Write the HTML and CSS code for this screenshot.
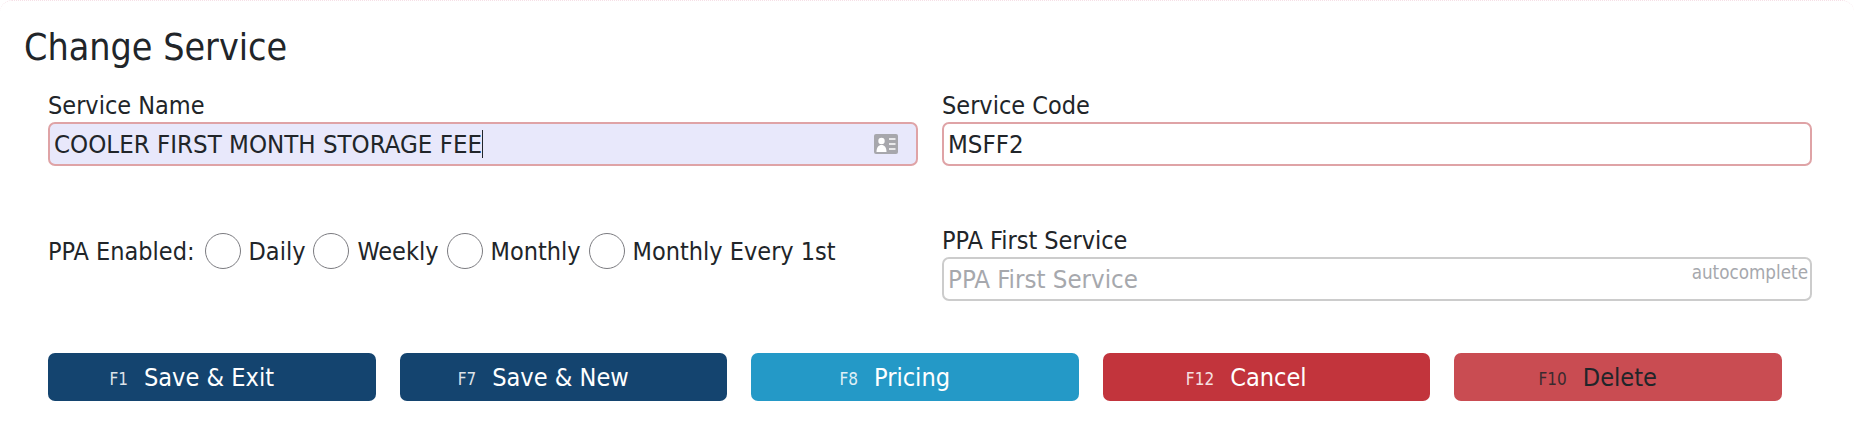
FILE: index.html
```html
<!DOCTYPE html>
<html lang="en">
<head>
<meta charset="utf-8">
<title>Change Service</title>
<link rel="stylesheet" href="styles.css">
</head>
<body>
<main class="card">
  <h1 class="title">Change Service</h1>
  <div class="form-grid">
    <div class="group">
      <label class="label">Service Name</label>
      <div class="field field-error field-active">
        <span class="value">COOLER FIRST MONTH STORAGE FEE</span><span class="caret"></span>
        <svg class="contact-icon" viewBox="0 0 24 20" width="24" height="20" aria-hidden="true">
          <rect x="0" y="0" width="24" height="20" rx="2" fill="#a7a7ac"/>
          <circle cx="7.5" cy="7" r="3.2" fill="#fff"/>
          <path d="M2.500 18c0-4.500 2-7 5-7s5 2.500 5 7z" fill="#fff"/>
          <path d="M15 5h6.500M15 10h6.500M15 15h6.500" stroke="#fff" stroke-width="1.600"/>
        </svg>
      </div>
    </div>
    <div class="group">
      <label class="label">Service Code</label>
      <div class="field field-error"><span class="value">MSFF2</span></div>
    </div>
    <div class="radio-row">
      <span class="radio-title">PPA Enabled:</span>
      <span class="radio"></span><span class="radio-text">Daily</span>
      <span class="radio"></span><span class="radio-text">Weekly</span>
      <span class="radio"></span><span class="radio-text">Monthly</span>
      <span class="radio"></span><span class="radio-text">Monthly Every 1st</span>
    </div>
    <div class="group">
      <label class="label">PPA First Service</label>
      <div class="field field-plain">
        <span class="placeholder">PPA First Service</span>
        <span class="hint">autocomplete</span>
      </div>
    </div>
  </div>
  <div class="actions">
    <button class="btn btn-navy"><span class="key">F1</span>Save &amp; Exit</button>
    <button class="btn btn-navy"><span class="key">F7</span>Save &amp; New</button>
    <button class="btn btn-blue"><span class="key">F8</span>Pricing</button>
    <button class="btn btn-red"><span class="key">F12</span>Cancel</button>
    <button class="btn btn-faded"><span class="key">F10</span>Delete</button>
  </div>
</main>
</body>
</html>
```
FILE: styles.css
```css
* { box-sizing: border-box; }
html, body { margin: 0; padding: 0; background: #fff; }
body {
  height: 421px;
  overflow: hidden;
  font-family: "DejaVu Sans Condensed", "DejaVu Sans", sans-serif;
  font-stretch: condensed;
  color: #212529;
}
.card {
  height: 421px;
  padding: 22px 24px 0;
  border-top: 1px dotted #f6dfe6;
  border-radius: 12px 12px 0 0;
}
.title {
  margin: 0;
  font-size: 37.3px;
  font-weight: 400;
  line-height: 48px;
}
.form-grid {
  display: grid;
  grid-template-columns: 870px 870px;
  column-gap: 24px;
  margin: 19px 0 0 24px;
  grid-template-rows: 88px 128px;
  row-gap: 47px;
}
.group { display: flex; flex-direction: column; }
.label {
  font-size: 25px;
  line-height: 32px;
  display: block;
}
.field {
  position: relative;
  height: 44px;
  padding: 0 4px;
  display: flex;
  align-items: center;
  border: 2px solid #ccc;
  border-radius: 7px;
  background: #fff;
  font-size: 25.6px;
}
.field-error { border-color: #dfa3a6; }
.field-active { background: #e8e8fb; }
.caret {
  display: inline-block;
  width: 1px;
  height: 28px;
  background: #212529;
}
.contact-icon { position: absolute; right: 18px; top: 10px; }
.placeholder { color: #a6a8ad; }
.hint {
  position: absolute;
  right: 2px;
  top: 3px;
  font-size: 18.700px;
  color: #a6a8ad;
}
.radio-row {
  display: flex;
  align-items: center;
  font-size: 25px;
  height: 40px;
  margin-top: 6px;
}
.radio-title { margin-right: 10px; }
.radio {
  width: 36px;
  height: 36px;
  border: 1px solid #7b7b80;
  border-radius: 50%;
  background: #fff;
  margin-right: 8px;
}
.radio-text { margin-right: 8px; }
.actions {
  display: flex;
  gap: 24px;
  margin: 0 0 0 24px;
}
.btn {
  width: 327.5px;
  height: 48px;
  padding: 0 40px 0 0;
  border: 0;
  border-radius: 7px;
  font-family: inherit;
  font-stretch: condensed;
  font-size: 25.1px;
  color: #fff;
  display: flex;
  align-items: center;
  justify-content: center;
}
.key { font-size: 17px; margin-right: 16px; opacity: .85; padding-top: 4px; }
.btn-navy { background: #14446f; }
.btn-blue { background: #2499c7; }
.btn-red { background: #c2343c; }
.btn-faded { background: #c94c52; color: #212529; }
```
